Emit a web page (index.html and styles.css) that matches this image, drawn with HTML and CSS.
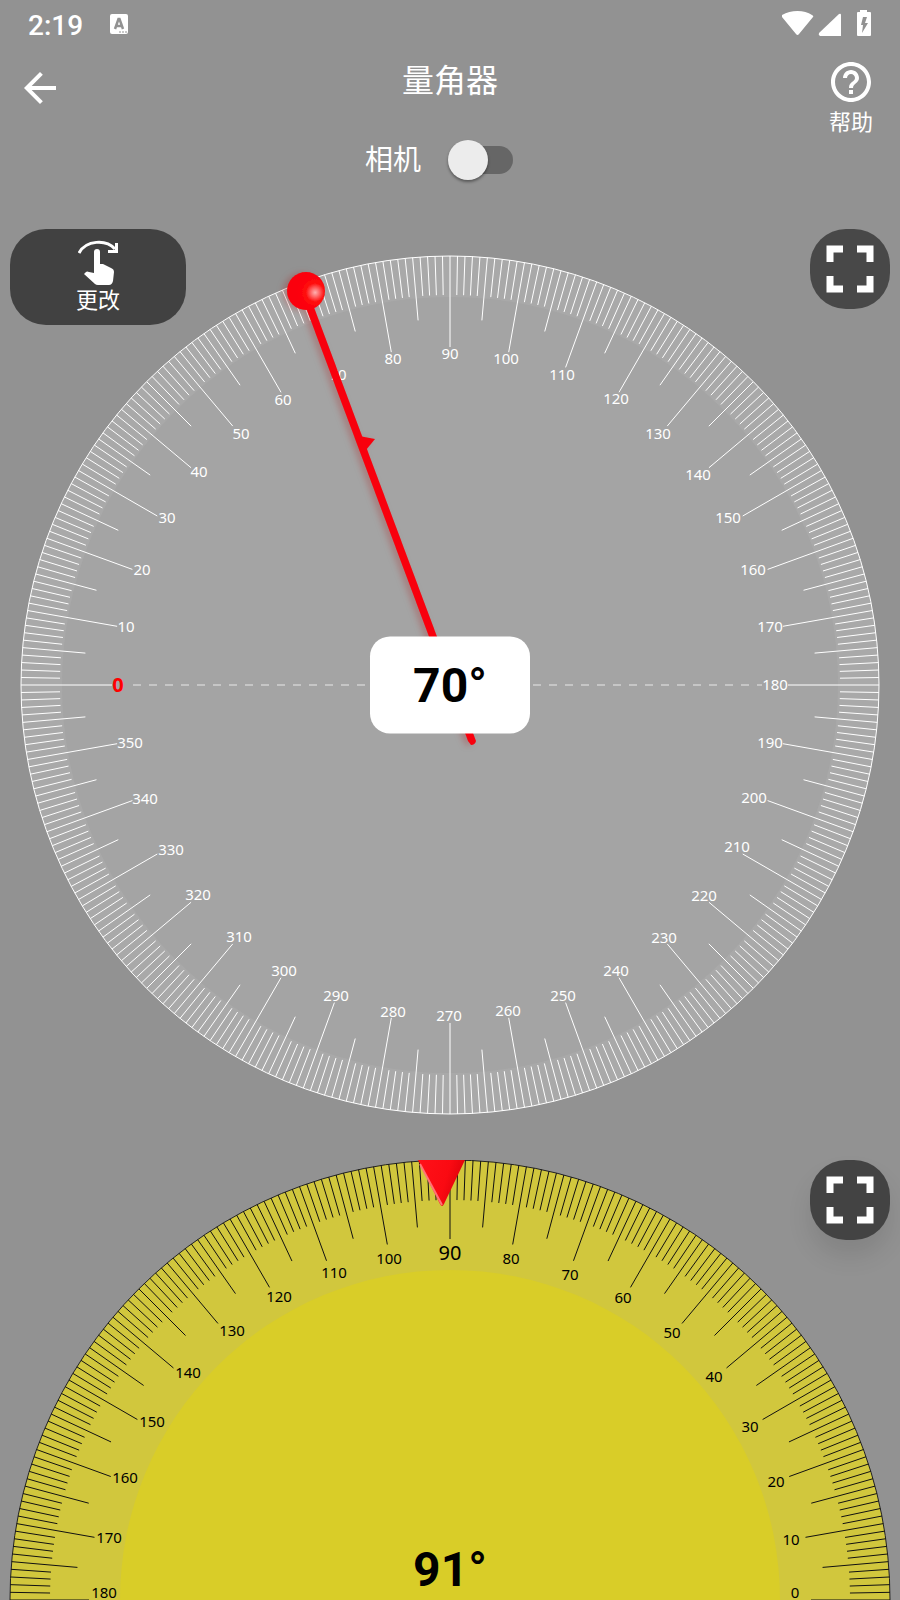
FILE: index.html
```html
<!DOCTYPE html>
<html lang="zh-CN">
<head>
    <meta charset="UTF-8">
    <meta name="viewport" content="width=device-width, initial-scale=1.0">
    <title>量角器</title>
    <link rel="stylesheet" href="styles.css">
</head>
<body>
    <div class="status-bar">
        <span class="time">2:19</span>
        <svg class="keyboard-icon" width="20" height="22" viewBox="0 0 20 22">
            <rect x="1" y="1" width="18" height="20" rx="2" fill="#fff"/>
            <path d="M6 16 9.500 6h1L14 16M7 13h6" fill="none" stroke="#929292" stroke-width="2.500"/>
            <path d="M10 19h2M13 19h2M16 19h2" stroke="#929292" stroke-width="1"/>
        </svg>
        <svg class="signal-icons" width="90" height="28" viewBox="0 0 90 28" fill="#fff">
            <path d="M0 7Q-1 6 0 5Q7 1 15.500 1T30 5Q32 6 31 7L17 24Q15.500 26 14 24Z"/>
            <path d="M38 26Q36 25 37 23L57 4Q59 3 59 5V26Z"/>
            <path d="M78 0h7v2h3q1 0 1 1v22q0 1-1 1H76q-1 0-1-1V3q0-1 1-1h2z"/>
            <path d="M81 7h4l-2 6h3l-6 10 1-8h-2z" fill="#929292"/>
        </svg>
    </div>

    <header class="header">
        <button class="icon-button back" aria-label="返回">
            <svg width="48" height="48" viewBox="0 0 24 24"><path d="M20 11H7.83l5.59-5.59L12 4l-8 8 8 8 1.41-1.41L7.83 13H20v-2z"/></svg>
        </button>
        <h1>量角器</h1>
        <button class="icon-button help">
            <svg width="48" height="48" viewBox="0 0 24 24"><path d="M11 18h2v-2h-2v2zm1-16C6.48 2 2 6.48 2 12s4.480 10 10 10 10-4.480 10-10S17.520 2 12 2zm0 18c-4.410 0-8-3.590-8-8s3.590-8 8-8 8 3.590 8 8-3.590 8-8 8zm0-14c-2.210 0-4 1.790-4 4h2c0-1.100.9-2 2-2s2 .9 2 2c0 2-3 1.750-3 5h2c0-2.250 3-2.500 3-5 0-2.210-1.790-4-4-4z"/></svg>
            <span>帮助</span>
        </button>
    </header>

    <div class="camera">
        <label for="camera">相机</label>
        <input type="checkbox" id="camera" class="switch" role="switch">
    </div>

    <main>
        <section class="dial-section">
            <svg class="dial" viewBox="-450 -456 900 931">
                <defs>
                    <radialGradient id="ball" cx="0.74" cy="0.54" r="0.5">
                        <stop offset="0" stop-color="#ffb0b0"/>
                        <stop offset="0.2" stop-color="#ff7070"/>
                        <stop offset="0.5" stop-color="#ff0a0a"/>
                        <stop offset="1" stop-color="#fb0008"/>
                    </radialGradient>
                    <filter id="shadow" x="-50%" y="-20%" width="200%" height="140%">
                        <feDropShadow dx="-4" dy="1" stdDeviation="3" flood-color="#a00" flood-opacity="0.25"/>
                    </filter>
                </defs>
                <circle class="ring" r="429"/>
                <circle class="disc" r="388"/>
                <path class="baseline" d="M-317 0H312"/>
                <g id="grayTicks" class="ticks"></g>
                <g id="grayLabels" class="labels"></g>
                <g filter="url(#shadow)">
                    <path d="M-145-380-138-383 26 56Q25 60 21 60L18 56Z" fill="#f8040b"/>
                    <path d="M-91-249-75-246-84-235Z" fill="#f8040b"/>
                    <circle cx="-144" cy="-394" r="19" fill="url(#ball)"/>
                </g>
            </svg>
            <button class="round-button change">
                <svg width="40" height="46" viewBox="0 0 40 46" fill="#fff">
                    <path d="M1 13C8 0 28-1 37 9" fill="none" stroke="#fff" stroke-width="3"/>
                    <path d="M37 3h3v10H30v-3h7z"/>
                    <path d="M16 12q0-3 3-3t3 3v12h3l8 4q3 1 3 4l-1 9q-1 4-4 4H20q-2 0-3-1L6 34l2-2q1-1 3 0l5 1z"/>
                </svg>
                <span>更改</span>
            </button>
            <button class="round-button full" aria-label="全屏">
                <svg width="48" height="48" viewBox="0 0 48 48"><path d="M4 17V4h13M31 4h13v13M44 31v13H31M17 44H4V31"/></svg>
            </button>
            <output class="reading boxed">70°</output>
        </section>

        <section class="dial-section">
            <svg class="dial" viewBox="-450 -440 900 440">
                <defs>
                    <linearGradient id="marker" x1="0" y1="0.2" x2="1" y2="0.5">
                        <stop offset="0" stop-color="#ff1018"/>
                        <stop offset="0.6" stop-color="#fa0a12"/>
                        <stop offset="1" stop-color="#d80008"/>
                    </linearGradient>
                </defs>
                <circle class="ring yellow" r="440"/>
                <circle class="disc yellow" r="330"/>
                <g id="yellowTicks" class="ticks dark"></g>
                <g id="yellowLabels" class="labels dark"></g>
                <path d="M-32-440H15L-6-396Q-8-392-10-396Z" fill="url(#marker)"/>
                <path d="M-30-436-8-395" fill="none" stroke="#ff7478" stroke-width="2"/>
            </svg>
            <button class="round-button full raised" aria-label="全屏">
                <svg width="48" height="48" viewBox="0 0 48 48"><path d="M4 17V4h13M31 4h13v13M44 31v13H31M17 44H4V31"/></svg>
            </button>
            <output class="reading">91°</output>
        </section>
    </main>

    <script src="script.js"></script>
</body>
</html>
```
FILE: styles.css
```css
* {
    box-sizing: border-box;
}
body {
    margin: 0;
    background-color: #929292;
    color: #fff;
    font-family: Roboto, "Noto Sans CJK SC", sans-serif;
    overflow-x: hidden;
}
button {
    border: none;
    padding: 0;
    color: inherit;
    font-family: inherit;
    cursor: pointer;
}
svg {
    display: block;
}
.status-bar {
    display: flex;
    align-items: center;
    height: 48px;
    padding: 0 28px;
}
.time {
    font-size: 28px;
    font-weight: 500;
    line-height: 48px;
    padding-top: 4px;
}
.keyboard-icon {
    margin-left: 26px;
}
.signal-icons {
    margin-left: auto;
}
.header {
    display: grid;
    grid-template-columns: 1fr auto 1fr;
    align-items: start;
    height: 92px;
    padding: 10px 25px 0 16px;
}
.header h1 {
    margin: 0;
    padding-left: 9px;
    font-size: 32px;
    font-weight: 400;
    line-height: 46px;
}
.icon-button {
    background: none;
    fill: #fff;
}
.back {
    justify-self: start;
    margin-top: 6px;
}
.help {
    justify-self: end;
    font-size: 22px;
    line-height: 34px;
}
.help span {
    display: block;
}
.camera {
    display: flex;
    justify-content: center;
    align-items: center;
    gap: 28px;
    height: 40px;
    margin-bottom: 49px;
    padding-right: 22px;
    font-size: 28px;
    line-height: 40px;
}
.camera label {
    padding-top: 2px;
}
.switch {
    appearance: none;
    position: relative;
    width: 64px;
    height: 28px;
    margin: 0;
    border-radius: 14px;
    background-color: #666;
}
.switch::before {
    content: "";
    position: absolute;
    left: -1px;
    top: -6px;
    width: 40px;
    height: 40px;
    border-radius: 50%;
    background-color: #ececec;
    box-shadow: 0 2px 3px rgba(0, 0, 0, 0.4);
}
.switch:checked::before {
    left: 25px;
}
.dial-section {
    position: relative;
}
.dial {
    width: 100%;
    height: auto;
}
.ring {
    fill: #a9a9a9;
    stroke: #fff;
    stroke-width: 1;
}
.disc {
    fill: #a4a4a4;
}
.ring.yellow {
    fill: #d1c73d;
    stroke: #222;
}
.disc.yellow {
    fill: #d9cd28;
}
.baseline {
    stroke: #c6c6c6;
    stroke-width: 2;
    stroke-dasharray: 8;
}
.ticks {
    stroke: #fff;
    stroke-width: 1;
}
.ticks.dark {
    stroke: #111;
}
.labels {
    fill: #fff;
    font-family: "Noto Sans", sans-serif;
    font-size: 15px;
    text-anchor: middle;
}
.labels.dark {
    fill: #000;
}
.labels .zero {
    fill: #f00;
    font-size: 20px;
    font-weight: 700;
}
.labels .top {
    font-size: 20px;
}
.round-button {
    position: absolute;
    top: 0;
    display: flex;
    flex-direction: column;
    align-items: center;
    justify-content: center;
    border-radius: 36px;
    background-color: #414141;
}
.change {
    left: 10px;
    width: 176px;
    height: 96px;
    font-size: 22px;
    line-height: 28px;
}
.change span {
    padding-top: 1px;
}
.full {
    right: 10px;
    width: 80px;
    height: 80px;
    background-color: #484848;
}
.full path {
    fill: none;
    stroke: #fff;
    stroke-width: 7;
}
.raised {
    background-color: #434343;
    box-shadow: 0 16px 24px rgba(0, 0, 0, 0.1);
}
.reading {
    position: absolute;
    left: 50%;
    bottom: 0;
    transform: translateX(-50%);
    color: #000;
    font-size: 48px;
    font-weight: 700;
    line-height: 60px;
}
.boxed {
    top: 49%;
    bottom: auto;
    transform: translate(-50%, -50%);
    width: 160px;
    padding: 19px 0 18px;
    border-radius: 20px;
    background-color: #fff;
    text-align: center;
}
```
FILE: script.js
```javascript
const SVG_NS = 'http://www.w3.org/2000/svg';

// label positions, relative to the centre of each dial
const grayLabels = [
    [0, -332, 0], [10, -324, -58], [20, -308, -115], [30, -283, -167], [40, -251, -213],
    [50, -209, -251], [60, -167, -285], [70, -112, -310], [80, -57, -326], [90, 0, -331],
    [100, 56, -326], [110, 112, -310], [120, 166, -286], [130, 208, -251], [140, 248, -210],
    [150, 278, -167], [160, 303, -115], [170, 320, -58], [180, 325, 0], [190, 320, 58],
    [200, 304, 113], [210, 287, 162], [220, 254, 211], [230, 214, 253], [240, 166, 286],
    [250, 113, 311], [260, 58, 326], [270, -1, 331], [280, -57, 327], [290, -114, 311],
    [300, -166, 286], [310, -211, 252], [320, -252, 210], [330, -279, 165], [340, -305, 114],
    [350, -320, 58]
];
const yellowLabels = [
    [0, 345, -7], [10, 341, -60], [20, 326, -118], [30, 300, -173], [40, 264, -223],
    [50, 222, -267], [60, 173, -302], [70, 120, -325], [80, 61, -341], [90, 0, -347],
    [100, -61, -341], [110, -116, -327], [120, -171, -303], [130, -218, -269], [140, -262, -227],
    [150, -298, -178], [160, -325, -122], [170, -341, -62], [180, -346, -7]
];

function drawTicks(id, count, outer, minor, middle, major) {
    let d = '';
    for (let i = 0; i < count; i++) {
        const angle = i * Math.PI / 180;
        const inner = i % 10 === 0 ? major : i % 5 === 0 ? middle : minor;
        const x = -Math.cos(angle);
        const y = -Math.sin(angle);
        d += `M${x * outer} ${y * outer}L${x * inner} ${y * inner}`;
    }
    const path = document.createElementNS(SVG_NS, 'path');
    path.setAttribute('d', d);
    document.getElementById(id).appendChild(path);
}

function drawLabels(id, labels, specialValue, specialClass) {
    labels.forEach(([value, x, y]) => {
        const special = value === specialValue;
        const text = document.createElementNS(SVG_NS, 'text');
        text.setAttribute('x', x);
        text.setAttribute('y', y + (special ? 7 : 5));
        if (special) {
            text.setAttribute('class', specialClass);
        }
        text.textContent = value;
        document.getElementById(id).appendChild(text);
    });
}

drawTicks('grayTicks', 360, 429, 390, 366, 338);
drawTicks('yellowTicks', 181, 440, 400, 374, 361);
drawLabels('grayLabels', grayLabels, 0, 'zero');
drawLabels('yellowLabels', yellowLabels, 90, 'top');
```
